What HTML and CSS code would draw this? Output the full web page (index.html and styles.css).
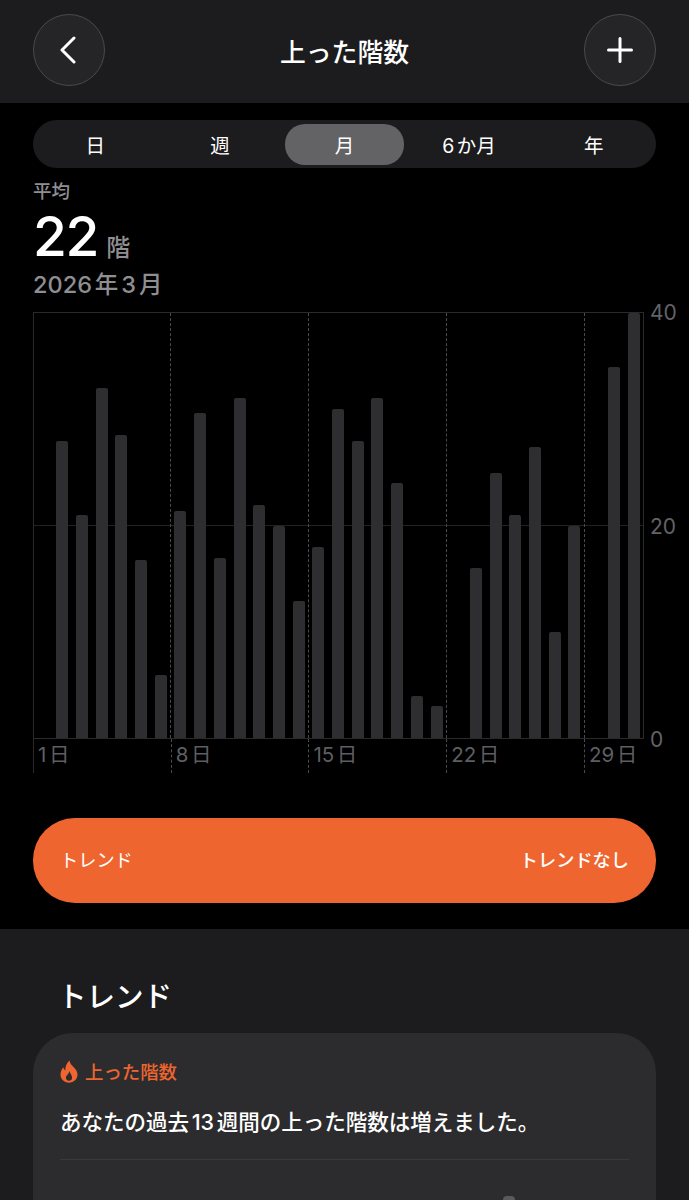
FILE: index.html
```html
<!DOCTYPE html>
<html lang="ja">
<head>
  <meta charset="UTF-8">
  <meta name="viewport" content="width=device-width, initial-scale=1.0">
  <title>上った階数</title>
  <link rel="stylesheet" href="styles.css">
</head>
<body>

  <!-- ヘッダー -->
  <header class="topbar">
    <button class="round-btn" aria-label="戻る">
      <svg width="20" height="28" viewBox="0 0 20 28"><path d="M15 2 L3 14 L15 26" fill="none" stroke="#fff" stroke-width="3" stroke-linecap="round" stroke-linejoin="round"/></svg>
    </button>
    <h1>上った階数</h1>
    <button class="round-btn" aria-label="追加">
      <svg width="26" height="26" viewBox="0 0 26 26"><path d="M13 1.5 V24.5 M1.5 13 H24.5" fill="none" stroke="#fff" stroke-width="3" stroke-linecap="round"/></svg>
    </button>
  </header>

  <main class="main">
    <!-- 期間 -->
    <div class="tabs">
      <span class="tab">日</span>
      <span class="tab">週</span>
      <span class="tab active">月</span>
      <span class="tab">6か月</span>
      <span class="tab">年</span>
    </div>

    <div class="summary">
      <p class="summary-label">平均</p>
      <p class="summary-value"><b>22</b> <span>階</span></p>
      <p class="summary-date">2026年3月</p>
    </div>

    <!-- グラフ -->
    <div class="chart">
      <div class="chart-left">
        <div class="plot">
          <div class="slot week"></div>
          <div class="slot"><i class="bar" style="height:297px"></i></div>
          <div class="slot"><i class="bar" style="height:223px"></i></div>
          <div class="slot"><i class="bar" style="height:350px"></i></div>
          <div class="slot"><i class="bar" style="height:303px"></i></div>
          <div class="slot"><i class="bar" style="height:178px"></i></div>
          <div class="slot"><i class="bar" style="height:63px"></i></div>
          <div class="slot week"><i class="bar" style="height:227px"></i></div>
          <div class="slot"><i class="bar" style="height:325px"></i></div>
          <div class="slot"><i class="bar" style="height:180px"></i></div>
          <div class="slot"><i class="bar" style="height:340px"></i></div>
          <div class="slot"><i class="bar" style="height:233px"></i></div>
          <div class="slot"><i class="bar" style="height:212px"></i></div>
          <div class="slot"><i class="bar" style="height:137px"></i></div>
          <div class="slot week"><i class="bar" style="height:191px"></i></div>
          <div class="slot"><i class="bar" style="height:329px"></i></div>
          <div class="slot"><i class="bar" style="height:297px"></i></div>
          <div class="slot"><i class="bar" style="height:340px"></i></div>
          <div class="slot"><i class="bar" style="height:255px"></i></div>
          <div class="slot"><i class="bar" style="height:42px"></i></div>
          <div class="slot"><i class="bar" style="height:32px"></i></div>
          <div class="slot week"></div>
          <div class="slot"><i class="bar" style="height:170px"></i></div>
          <div class="slot"><i class="bar" style="height:265px"></i></div>
          <div class="slot"><i class="bar" style="height:223px"></i></div>
          <div class="slot"><i class="bar" style="height:291px"></i></div>
          <div class="slot"><i class="bar" style="height:106px"></i></div>
          <div class="slot"><i class="bar" style="height:212px"></i></div>
          <div class="slot week"></div>
          <div class="slot"><i class="bar" style="height:371px"></i></div>
          <div class="slot"><i class="bar" style="height:425px"></i></div>
        </div>
        <div class="x-axis">
          <span>1日</span>
          <span>8日</span>
          <span>15日</span>
          <span>22日</span>
          <span>29日</span>
        </div>
      </div>
      <div class="y-axis">
        <span>40</span>
        <span>20</span>
        <span>0</span>
      </div>
    </div>

    <div class="trend-pill">
      <span>トレンド</span>
      <strong>トレンドなし</strong>
    </div>
  </main>

  <!-- トレンド -->
  <section class="trends">
    <h2>トレンド</h2>
    <div class="card">
      <div class="card-title">
        <svg width="18" height="23" viewBox="0 0 18 23"><path fill="#ef6530" fill-rule="evenodd" d="M9.5 0.5 C10 3.5 11.5 5 13.5 7 C15.8 9.3 17.5 11.5 17.5 14.6 C17.5 19.3 13.8 22.8 9 22.8 C4.2 22.8 0.5 19.3 0.5 14.6 C0.5 11.6 1.8 9.3 3.4 7.3 C3.7 8.8 4.3 9.8 5.3 10.4 C5.2 6.6 6.6 3 9.5 0.5 Z M9.3 11 C9.2 12.6 8.4 13.6 7.4 14.7 C6.5 15.7 5.9 16.6 5.9 17.8 C5.9 19.6 7.3 20.8 9 20.8 C10.8 20.8 12.1 19.6 12.1 17.8 C12.1 15.1 10.1 13.6 9.3 11 Z"/></svg>
        <span>上った階数</span>
      </div>
      <p class="card-text">あなたの過去13週間の上った階数は増えました。</p>
      <div class="card-chart"><i class="mini-bar"></i></div>
    </div>
  </section>

</body>
</html>
```

FILE: styles.css
```css
* {
  box-sizing: border-box;
}
html, body {
  height: 1200px;
  overflow: hidden;
}
body {
  margin: 0;
  background-color: #000;
  color: #fff;
  font-family: Inter, "Noto Sans CJK JP", sans-serif;
  text-autospace: normal;
}
p, h1, h2 {
  margin: 0;
}

.topbar {
  height: 103px;
  padding: 0 33px 3px;
  display: flex;
  justify-content: space-between;
  align-items: center;
  background-color: #1c1c1e;
}
.topbar h1 {
  font-size: 25.8px;
  font-weight: 500;
}
.round-btn {
  width: 72px;
  height: 72px;
  padding: 0;
  display: flex;
  justify-content: center;
  align-items: center;
  background-color: #252527;
  border: 1.5px solid #4a4a4c;
  border-radius: 50%;
}

.main {
  height: 826px;
  padding: 17px 33px 0;
}

.tabs {
  height: 48px;
  display: flex;
  align-items: center;
  background-color: #1c1c1e;
  border-radius: 24px;
}
.tab {
  flex: 1;
  height: 41px;
  margin: 0 3px;
  display: flex;
  justify-content: center;
  align-items: center;
  font-size: 19.5px;
  border-radius: 20px;
}
.tab.active {
  background-color: #636366;
}

.summary {
  margin-top: 11px;
}
.summary-label {
  font-size: 18.5px;
  line-height: 24px;
  font-weight: 500;
  color: #8e8e93;
}
.summary-value {
  height: 54px;
  margin-top: 6px;
  line-height: 54px;
}
.summary-value b {
  font-size: 55px;
  font-weight: 500;
  letter-spacing: -1.5px;
}
.summary-value span {
  margin-left: 4px;
  font-size: 24px;
  font-weight: 500;
  color: #8e8e93;
}
.summary-date {
  margin-top: 7px;
  font-size: 23.5px;
  line-height: 30px;
  font-weight: 500;
  color: #8e8e93;
}

/* グラフ */
.chart {
  margin-top: 12px;
  margin-right: -33px;
  display: flex;
}
.chart-left {
  flex: none;
  width: 611px;
}
.plot {
  height: 427px;
  display: flex;
  background: linear-gradient(#222, #222) center / 100% 1px no-repeat;
  border: 1px solid #2a2a2b;
  border-left: none;
  box-shadow: inset 1px 0 #2a2a2b;
}
.slot {
  flex: 1;
  display: flex;
  align-items: flex-end;
  padding-left: 4.5px;
}
.slot.week {
  border-left: 1px dashed #4a4a4c;
  padding-left: 3.5px;
}
.slot:first-child {
  border-left: none;
}
.bar {
  display: block;
  width: 12px;
  background-color: #2e2e30;
  border-radius: 2px 2px 0 0;
}
.x-axis {
  height: 34px;
  padding-right: 1px;
  display: grid;
  grid-template-columns: 7fr 7fr 7fr 7fr 3fr;
}
.x-axis span {
  padding-left: 4px;
  padding-top: 3px;
  font-size: 20.5px;
  line-height: 26px;
  white-space: nowrap;
  color: #5e5e62;
  border-left: 1px dashed #4a4a4c;
}
.x-axis span:first-child {
  border-left: 1px solid #2a2a2b;
}
.y-axis {
  height: 427px;
  padding-left: 6px;
  display: flex;
  flex-direction: column;
  justify-content: space-between;
  font-size: 21px;
  line-height: 24px;
  color: #636366;
}
.y-axis span {
  margin: -11px 0 -13px;
}

.trend-pill {
  height: 85px;
  margin-top: 45px;
  padding: 0 27px 3px;
  display: flex;
  justify-content: space-between;
  align-items: center;
  background-color: #ef6530;
  border-radius: 42px;
  font-size: 18.2px;
}
.trend-pill strong {
  font-weight: 500;
}

/* トレンド */
.trends {
  height: 271px;
  padding: 47px 33px 0;
  overflow: hidden;
  background-color: #1c1c1e;
}
.trends h2 {
  padding-left: 25px;
  font-size: 28.5px;
  line-height: 42px;
  font-weight: 500;
}
.card {
  height: 300px;
  margin-top: 15px;
  padding: 25px 27px 0;
  background-color: #2c2c2e;
  border-radius: 40px;
}
.card-title {
  display: flex;
  align-items: center;
  gap: 7px;
  color: #ef6530;
  font-size: 18.4px;
  font-weight: 500;
}
.card-text {
  margin-top: 23px;
  padding-bottom: 22px;
  font-size: 21.5px;
  line-height: 30px;
  font-weight: 500;
  border-bottom: 1px solid #3a3a3c;
}
.card-chart {
  padding: 36px 0 0 443px;
}
.mini-bar {
  display: block;
  width: 12px;
  height: 20px;
  background-color: #5a5a5e;
  border-radius: 4px 4px 0 0;
}
```
